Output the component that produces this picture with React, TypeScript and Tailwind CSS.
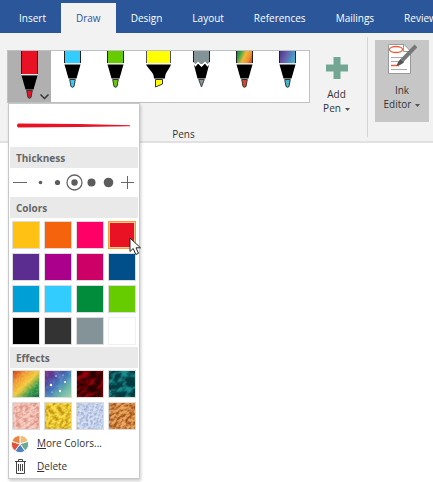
import type { ReactNode } from "react";

const TABS = ["Insert", "Draw", "Design", "Layout", "References", "Mailings", "Review"];

type Pen = { name: string; fill: string; tip: string; kind: "pen" | "marker" | "pencil" };

const PENS: Pen[] = [
  { name: "Red pen", fill: "#e81224", tip: "#e81224", kind: "pen" },
  { name: "Light blue pen", fill: "#33ccff", tip: "#33ccff", kind: "pen" },
  { name: "Green pen", fill: "#66cc00", tip: "#66cc00", kind: "pen" },
  { name: "Yellow highlighter", fill: "#ffff00", tip: "#ffff00", kind: "marker" },
  { name: "Grey pencil", fill: "#849398", tip: "#849398", kind: "pencil" },
  { name: "Rainbow pen", fill: "url(#pen-rainbow)", tip: "#d8432a", kind: "pen" },
  { name: "Galaxy pen", fill: "url(#pen-galaxy)", tip: "#45b3cc", kind: "pen" },
];

const COLORS = [
  { name: "Gold", bg: "bg-[#ffc114]" },
  { name: "Orange", bg: "bg-[#f6630d]" },
  { name: "Pink", bg: "bg-[#ff0066]" },
  { name: "Red", bg: "bg-[#e81224]" },
  { name: "Purple", bg: "bg-[#5b2d90]" },
  { name: "Magenta", bg: "bg-[#ab008b]" },
  { name: "Raspberry", bg: "bg-[#cc0066]" },
  { name: "Dark blue", bg: "bg-[#004f8b]" },
  { name: "Blue", bg: "bg-[#00a0d7]" },
  { name: "Light blue", bg: "bg-[#33ccff]" },
  { name: "Green", bg: "bg-[#008c3a]" },
  { name: "Light green", bg: "bg-[#66cc00]" },
  { name: "Black", bg: "bg-black" },
  { name: "Dark grey", bg: "bg-[#333333]" },
  { name: "Grey", bg: "bg-[#849398]" },
  { name: "White", bg: "bg-white" },
];

type Effect = { name: string; base: string; grain: string; stops?: string[]; stars?: boolean; freq: string; seed: number };

const EFFECTS: Effect[] = [
  { name: "Rainbow", base: "#f0a030", grain: "#fff0a0", stops: ["#c8301c", "#f0922c", "#f2c838", "#259447", "#17653f"], freq: "0.5", seed: 1 },
  { name: "Galaxy", base: "#4b5ba8", grain: "#80b8f0", stops: ["#8a2378", "#53419a", "#4678b8", "#69b8a0", "#a9d4a0"], stars: true, freq: "0.18", seed: 4 },
  { name: "Lava", base: "#2c0003", grain: "#a8000a", freq: "0.11 0.2", seed: 8 },
  { name: "Ocean", base: "#043a40", grain: "#1c9c9c", freq: "0.11 0.2", seed: 12 },
  { name: "Rose gold", base: "#f8cfc4", grain: "#d88878", freq: "0.24 0.4", seed: 3 },
  { name: "Gold glitter", base: "#fadf48", grain: "#b88408", freq: "0.24 0.4", seed: 6 },
  { name: "Silver", base: "#d8e2f6", grain: "#94a6cc", freq: "0.4 0.5", seed: 9 },
  { name: "Bronze", base: "#eba860", grain: "#93400c", freq: "0.24 0.4", seed: 15 },
];

function PenGradients() {
  return (
    <defs>
      <linearGradient id="pen-rainbow" gradientUnits="userSpaceOnUse" x1="13" y1="1" x2="31" y2="9">
        <stop offset="0" stopColor="#17713f" />
        <stop offset="0.250" stopColor="#3aa34a" />
        <stop offset="0.500" stopColor="#f2b838" />
        <stop offset="0.750" stopColor="#f09030" />
        <stop offset="1" stopColor="#c8301c" />
      </linearGradient>
      <linearGradient id="pen-galaxy" gradientUnits="userSpaceOnUse" x1="13" y1="1" x2="31" y2="9">
        <stop offset="0" stopColor="#46317e" />
        <stop offset="0.400" stopColor="#6a5cab" />
        <stop offset="0.700" stopColor="#4a90c4" />
        <stop offset="1" stopColor="#54b4c4" />
      </linearGradient>
    </defs>
  );
}

function PenDrawing({ pen, raised }: { pen: Pen; raised: boolean }) {
  return (
    <svg width="43" height="51" viewBox="0 1 43 51" aria-hidden="true">
      <PenGradients />
      {pen.kind === "pen" && (
        <g transform={raised ? "translate(0 11)" : undefined}>
          <path d="M14 -12H29V13H14Z" fill={pen.fill} />
          <path d="M13.500 -12V13M29.500 -12V13" stroke="#222" />
          <path d="M13.500 14.500H29.500L25.500 28.500H17.500Z" fill="#000" />
          <path d="M13 13.500H30" stroke="#e8e8e8" />
          <path d="M18.700 29.500H24.300L23 36.500Q21.500 38 20 36.500Z" fill={pen.tip} stroke="#333" />
        </g>
      )}
      {pen.kind === "marker" && (
        <g>
          <path d="M10 0H33V13H10Z" fill={pen.fill} />
          <path d="M9.500 0V13M33.500 0V13" stroke="#555" />
          <path d="M9 14.500H34C32 20 28 22 28 28.500H17C17 22 12 20 9 14.500Z" fill="#000" />
          <path d="M18.500 29.500H25.500V34L18.500 37Z" fill={pen.tip} stroke="#333" />
        </g>
      )}
      {pen.kind === "pencil" && (
        <g>
          <path d="M14 0H29V14H14Z" fill={pen.fill} />
          <path d="M13.500 0V13M29.500 0V13" stroke="#222" />
          <path d="M13.500 13L15.500 16L18 13L21.500 16.500L25 13L27.500 16L29.500 13L25.500 28.500H17.500Z" fill="#000" />
          <path d="M13 12.500L15.500 15.500L18 12.500L21.500 16L25 12.500L27.500 15.500L30 12.500" fill="none" stroke="#fff" strokeWidth="1.500" />
          <path d="M18.700 29.500H24.300L21.500 37Z" fill={pen.tip} stroke="#444" />
        </g>
      )}
      {raised && <path d="M32.500 44.500L36.500 48.500L40.500 44.500" fill="none" stroke="#333" strokeWidth="1.500" />}
    </svg>
  );
}

function EffectSwatch({ effect, index }: { effect: Effect; index: number }) {
  const smooth = Boolean(effect.stops);
  return (
    <svg width="26" height="26" viewBox="0 0 26 26" aria-hidden="true">
      <defs>
        <filter id={`grain-${index}`} x="0" y="0" width="100%" height="100%">
          <feTurbulence type="fractalNoise" baseFrequency={effect.freq} numOctaves="4" seed={effect.seed} />
          <feColorMatrix values="0 0 0 0 0  0 0 0 0 0  0 0 0 0 0  3.5 0 0 0 -1.4" result="mask" />
          <feComposite in="SourceGraphic" in2="mask" operator="in" />
        </filter>
        <linearGradient id={`wash-${index}`} x1="0" y1="0" x2="1" y2="1">
          {effect.stops?.map((color, i) => (
            <stop key={color} offset={i / 4} stopColor={color} />
          ))}
        </linearGradient>
      </defs>
      <rect width="26" height="26" fill={smooth ? `url(#wash-${index})` : effect.base} />
      <g transform="rotate(-35 13 13)">
        <rect x="-8" y="-8" width="42" height="42" fill={effect.grain} opacity={smooth ? 0.25 : 0.85} filter={`url(#grain-${index})`} />
      </g>
      {effect.stars && (
        <g fill="#fff">
          <circle cx="6" cy="14" r="1.200" />
          <circle cx="15" cy="20" r="1.200" />
          <circle cx="20" cy="11" r="1" />
          <circle cx="11" cy="5" r="0.700" />
          <circle cx="18" cy="4" r="0.600" />
          <circle cx="7" cy="21" r="0.600" />
        </g>
      )}
    </svg>
  );
}

function SectionTitle({ children }: { children: ReactNode }) {
  return <h2 className="mx-px h-[21px] bg-[#e9e9e9] px-[6px] leading-[22px] font-bold text-[#666]">{children}</h2>;
}

const THICKNESS = [1.8, 2.6, 3.2, 4, 4.8];

function ThicknessRow() {
  return (
    <div className="flex h-[29px] items-center justify-between px-1">
      <button type="button" aria-label="Thinner">
        <svg width="14" height="18" viewBox="0 0 14 18">
          <path d="M0 8.500H14" stroke="#666" />
        </svg>
      </button>
      <div className="flex">
        {THICKNESS.map((radius, i) => (
          <button type="button" key={radius} aria-label={`Thickness ${i + 1}`} aria-pressed={i === 2}>
            <svg width="17" height="18" viewBox="0 0 17 18">
              <circle cx="8.500" cy="8.500" r={radius} fill="#5c5c5c" />
              {i === 2 && <circle cx="8.500" cy="8.500" r="7.500" fill="none" stroke="#666" strokeWidth="1.300" />}
            </svg>
          </button>
        ))}
      </div>
      <button type="button" aria-label="Thicker">
        <svg width="14" height="18" viewBox="0 0 14 18">
          <path d="M0 8.500H13M6.500 2V15" stroke="#666" />
        </svg>
      </button>
    </div>
  );
}

function PenMenu() {
  return (
    <div className="absolute top-full left-px z-10 w-[132px] border border-[#c8c8c8] bg-white shadow-[1px_2px_3px_rgba(0,0,0,0.2)]">
      <svg className="block" width="130" height="43" viewBox="0 0 130 43" aria-hidden="true">
        <path d="M9 19.500L70 20L121 21.300V22.200L70 23L9 23.500Q7 21.500 9 19.500Z" fill="#e81224" />
      </svg>
      <SectionTitle>Thickness</SectionTitle>
      <ThicknessRow />
      <SectionTitle>Colors</SectionTitle>
      <div className="grid grid-cols-4 justify-items-center gap-y-1 px-px pt-[3px] pb-[2px]">
        {COLORS.map((color) => (
          <button
            type="button"
            key={color.name}
            aria-label={color.name}
            aria-pressed={color.name === "Red"}
            className={`size-7 border ${color.bg} ${color.name === "Red" ? "border-[#f59b3c] ring-1 ring-[#ffc888] ring-inset" : color.name === "White" ? "border-[#f0f0f0]" : "border-[#dcdcdc]"}`}
          />
        ))}
      </div>
      <SectionTitle>Effects</SectionTitle>
      <div className="grid grid-cols-4 justify-items-center gap-y-1 px-px py-[2px]">
        {EFFECTS.map((effect, i) => (
          <button type="button" key={effect.name} aria-label={effect.name} className="size-7 border border-[#dcdcdc]">
            <EffectSwatch effect={effect} index={i} />
          </button>
        ))}
      </div>
      <button type="button" className="flex h-[23px] w-full items-center gap-2 pl-[2px] text-left">
        <svg width="18" height="18" viewBox="-9 -9 18 18" aria-hidden="true">
          {["#f2bd72", "#70a995", "#4e83bd", "#e0523b", "#e88742"].map((fill, i) => (
            <path key={fill} d="M0 0V-8.500A8.500 8.500 0 0 1 8.080 -2.630Z" fill={fill} stroke="#fff" strokeWidth="0.800" transform={`rotate(${i * 72})`} />
          ))}
        </svg>
        <span>
          <u>M</u>ore Colors...
        </span>
      </button>
      <button type="button" className="flex h-[23px] w-full items-center gap-2 pl-[2px] text-left">
        <svg width="18" height="18" viewBox="0 0 18 18" fill="none" stroke="#444" aria-hidden="true">
          <path d="M4 3.500H15M7.500 3V1.500H11.500V3M5.500 4V15.500H13.500V4M7.500 6V13M9.500 6V13M11.500 6V13" />
        </svg>
        <span>
          <u>D</u>elete
        </span>
      </button>
      <svg className="absolute top-[133px] left-[120px]" width="13" height="19" viewBox="0 0 13 19" aria-hidden="true">
        <path d="M1 1V14.500L4.200 11.500L6.800 17.500L9.500 16.300L7 10.800H11.500Z" fill="#fff" stroke="#222" />
      </svg>
    </div>
  );
}

function Caret() {
  return (
    <svg className="ml-1 inline-block align-middle" width="5" height="3" viewBox="0 0 5 3" aria-hidden="true">
      <path d="M0 0H5L2.500 3Z" fill="#555" />
    </svg>
  );
}

export default function App() {
  return (
    <div className="min-h-screen w-full overflow-hidden bg-white font-['Open_Sans','Noto_Sans',sans-serif] text-[10px] text-[#333]">
      <nav className="flex h-[33px] bg-[#2b579a] pt-[3px] pl-1">
        {TABS.map((tab) => (
          <button
            type="button"
            key={tab}
            aria-current={tab === "Draw" ? "page" : undefined}
            className={`shrink-0 px-[15px] leading-[31px] ${tab === "Draw" ? "bg-[#f2f2f2] text-[#2b579a]" : "text-white"}`}
          >
            {tab}
          </button>
        ))}
      </nav>
      <main className="flex h-[110px] border-b-2 border-[#e1e1e1] bg-[#f2f2f2]">
        <section className="flex w-[367px] shrink-0 flex-col justify-between pt-[17px] pl-[7px]">
          <div className="flex items-start">
            <div className="relative">
              <div className="flex border border-[#bcc1c5] bg-white">
                {PENS.map((pen, i) => (
                  <button type="button" key={pen.name} aria-label={pen.name} aria-expanded={i === 0} className={i === 0 ? "bg-[#b0b0b0]" : ""}>
                    <PenDrawing pen={pen} raised={i === 0} />
                  </button>
                ))}
              </div>
              <PenMenu />
            </div>
            <button type="button" className="flex flex-1 flex-col items-center gap-2 pt-[7px] pr-1 leading-[14px]">
              <svg width="22" height="22" viewBox="0 0 22 22" aria-hidden="true">
                <path d="M7.500 0H14.500V7.500H22V14.500H14.500V22H7.500V14.500H0V7.500H7.500Z" fill="#73a794" />
              </svg>
              <span>
                Add
                <br />
                Pen
                <Caret />
              </span>
            </button>
          </div>
          <p className="pr-[7px] text-center leading-[14px]">Pens</p>
        </section>
        <div className="my-1 w-px shrink-0 bg-[#d4d4d4]" />
        <section className="shrink-0 px-[7px] pt-[7px]">
          <button type="button" className="flex h-[82px] w-[54px] flex-col items-center gap-2 bg-[#c6c6c6] pt-[3px] leading-[14px]">
            <svg width="30" height="32" viewBox="0 0 30 32" aria-hidden="true">
              <path d="M1.500 1.500H17L23.500 8V30.500H1.500Z" fill="#fff" stroke="#999" />
              <path d="M16.500 1.500V8.500H23.500" fill="none" stroke="#999" />
              <path d="M4 14.500H20M4 18.500H17M4 26.500H20" stroke="#aaa" />
              <path d="M4 22.500H12" stroke="#e8603c" strokeWidth="1.500" />
              <ellipse cx="9" cy="6.500" rx="6.500" ry="3" fill="none" stroke="#e8603c" strokeWidth="1.300" />
              <path d="M29 3L15 17.500" stroke="#777" strokeWidth="4" />
              <path d="M13.500 16L17 19.500Q14 22 9.500 23Q11 18 13.500 16Z" fill="#555" />
            </svg>
            <span>
              Ink
              <br />
              Editor
              <Caret />
            </span>
          </button>
        </section>
      </main>
    </div>
  );
}
